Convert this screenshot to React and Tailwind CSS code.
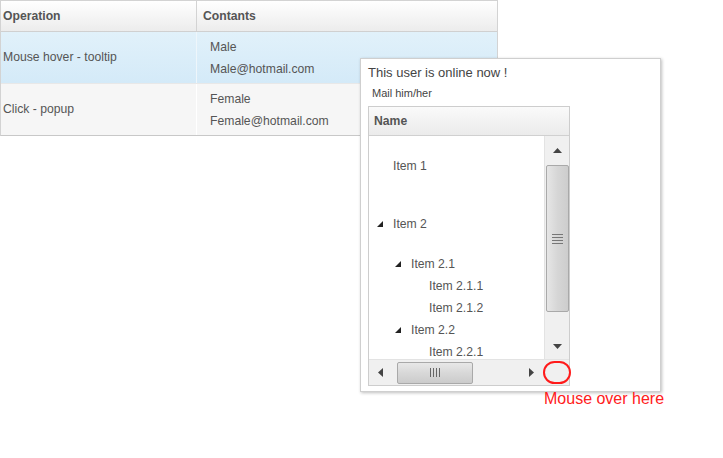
const font = { fontFamily: '"Liberation Sans", Arial, sans-serif' };

const Tri = ({ className = '' }) => (
  <svg width="6" height="6" viewBox="0 0 6 6" className={className}>
    <path d="M6 0 L6 6 L0 6 Z" fill="#222" />
  </svg>
);

const TreeRow = ({ label, indent, expander, className = '' }) => (
  <div className={`flex items-center h-[22px] ${className}`}>
    <div style={{ width: indent }} className="shrink-0" />
    <div className="w-[18px] shrink-0 flex items-center pl-[2px]">{expander && <Tri />}</div>
    <span>{label}</span>
  </div>
);

const App = () => {
  return (
    <div className="relative w-[723px] h-[458px] bg-white text-[12.2px] text-[#555]" style={font}>
      {/* Grid */}
      <div className="w-[498px] border border-[#d3d3d3] border-b-[#c8c8c8]">
        <div className="flex h-[31px] bg-gradient-to-b from-white to-[#ececec] border-b border-[#d0d0d0] font-bold text-[#555]">
          <div className="w-[196px] px-[2px] flex items-center border-r border-[#d3d3d3]">Operation</div>
          <div className="flex-1 px-[6px] flex items-center">Contants</div>
        </div>
        <div className="flex h-[52px] bg-gradient-to-b from-[#e1f1fa] to-[#d4eaf8] border-b border-[#e8e8e8]">
          <div className="w-[196px] px-[2px] flex items-center border-r border-[#eef6fb]">Mouse hover - tooltip</div>
          <div className="flex-1 pl-[13px] flex flex-col justify-center leading-[22px]">
            <span>Male</span>
            <span>Male@hotmail.com</span>
          </div>
        </div>
        <div className="flex h-[51px] bg-[#f6f6f6]">
          <div className="w-[196px] px-[2px] flex items-center border-r border-white">Click - popup</div>
          <div className="flex-1 pl-[13px] flex flex-col justify-center leading-[22px]">
            <span>Female</span>
            <span>Female@hotmail.com</span>
          </div>
        </div>
      </div>

      {/* Tooltip */}
      <div className="absolute left-[360px] top-[58px] w-[301px] h-[334px] bg-white border border-[#cfcfcf] shadow-[1px_1px_3px_rgba(0,0,0,0.25)] px-[7px]">
        <div className="text-[13px] text-[#444] leading-[16px] mt-[6px]">This user is online now !</div>
        <div className="text-[11px] text-[#444] leading-[14px] mt-[5px] pl-[4px]">Mail him/her</div>
        <div className="mt-[6px] w-[202px] border border-[#cdcdcd]">
          <div className="h-[29px] bg-gradient-to-b from-[#fafafa] to-[#ebebeb] border-b border-[#d0d0d0] flex items-center px-[5px] font-bold text-[#555]">Name</div>
          <div className="flex h-[223px] bg-white">
            <div className="flex-1 overflow-hidden">
              <div className="h-[60px] pt-[19px]">
                <TreeRow label="Item 1" indent={6} />
              </div>
              <div className="pt-[17px]">
                <TreeRow label="Item 2" indent={6} expander className="mb-[18px]" />
                <TreeRow label="Item 2.1" indent={24} expander />
                <TreeRow label="Item 2.1.1" indent={42} />
                <TreeRow label="Item 2.1.2" indent={42} />
                <TreeRow label="Item 2.2" indent={24} expander />
                <TreeRow label="Item 2.2.1" indent={42} />
              </div>
            </div>
            {/* vertical scrollbar */}
            <div className="w-[25px] bg-[#f0f0f0] border-l border-[#e3e3e3] flex flex-col items-center">
              <div className="h-[29px] flex items-center justify-center">
                <svg width="9" height="5" viewBox="0 0 9 5"><path d="M4.5 0 L9 5 L0 5 Z" fill="#444" /></svg>
              </div>
              <div className="w-[23px] h-[147px] rounded-[2px] border border-[#a9a9a9] bg-gradient-to-r from-[#e6e6e6] via-[#d6d6d6] to-[#cdcdcd] flex flex-col items-center justify-center gap-[2px]">
                <div className="w-[11px] h-[1px] bg-[#777]" />
                <div className="w-[11px] h-[1px] bg-[#777]" />
                <div className="w-[11px] h-[1px] bg-[#777]" />
                <div className="w-[11px] h-[1px] bg-[#777]" />
              </div>
              <div className="flex-1" />
              <div className="h-[26px] flex items-center justify-center">
                <svg width="9" height="5" viewBox="0 0 9 5"><path d="M0 0 L9 0 L4.5 5 Z" fill="#444" /></svg>
              </div>
            </div>
          </div>
          {/* horizontal scrollbar */}
          <div className="flex h-[26px] border-t border-[#e3e3e3]">
            <div className="flex-1 bg-[#f0f0f0] flex items-center">
              <div className="w-[28px] flex items-center pl-[9px]">
                <svg width="5" height="9" viewBox="0 0 5 9"><path d="M5 0 L5 9 L0 4.5 Z" fill="#444" /></svg>
              </div>
              <div className="w-[76px] h-[22px] rounded-[2px] border border-[#a9a9a9] bg-gradient-to-b from-[#e8e8e8] via-[#d8d8d8] to-[#cbcbcb] flex items-center justify-center gap-[2px]">
                <div className="w-[1px] h-[9px] bg-[#666]" />
                <div className="w-[1px] h-[9px] bg-[#666]" />
                <div className="w-[1px] h-[9px] bg-[#666]" />
                <div className="w-[1px] h-[9px] bg-[#666]" />
              </div>
              <div className="flex-1" />
              <div className="w-[26px] flex items-center justify-center">
                <svg width="5" height="9" viewBox="0 0 5 9"><path d="M0 0 L5 4.5 L0 9 Z" fill="#444" /></svg>
              </div>
            </div>
            <div className="w-[25px] bg-[#f0f0f0] flex items-center justify-center">
              <div className="shrink-0 w-[28px] h-[23px] rounded-full border-2 border-[#ff1a1a]" />
            </div>
          </div>
        </div>
      </div>
      <div className="absolute left-[544px] top-[390px] text-[16px] leading-[18px] text-[#ff2020]">Mouse over here</div>
    </div>
  );
};

export default App;
